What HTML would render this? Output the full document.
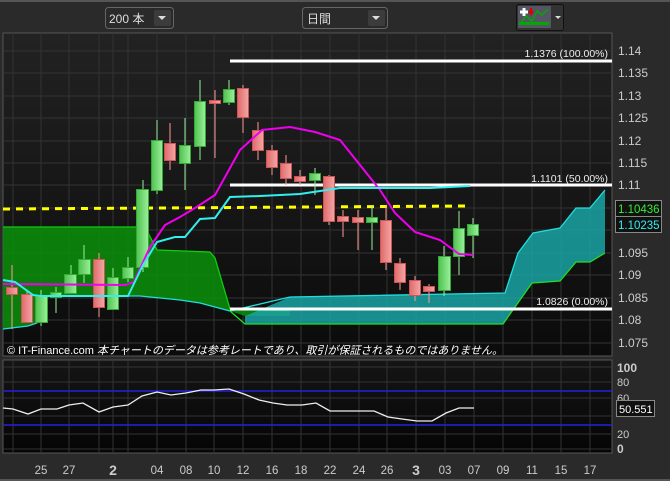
<!DOCTYPE html><html><head><meta charset="utf-8"><style>
body{margin:0;width:670px;height:481px;background:#2a2a2a;overflow:hidden;font-family:"Liberation Sans","Noto Sans CJK JP",sans-serif}
</style></head><body>
<svg width="670" height="481" xmlns="http://www.w3.org/2000/svg" style="position:absolute;left:0;top:0;font-family:'Liberation Sans','Noto Sans CJK JP',sans-serif">
<defs>
<linearGradient id="bg" x1="0" y1="0" x2="0" y2="1"><stop offset="0" stop-color="#222"/><stop offset="1" stop-color="#0b0b0b"/></linearGradient>
<linearGradient id="gc" x1="0" y1="0" x2="1" y2="0"><stop offset="0" stop-color="#4fc24f"/><stop offset="1" stop-color="#9af09a"/></linearGradient>
<linearGradient id="rc" x1="0" y1="0" x2="1" y2="0"><stop offset="0" stop-color="#e06a6a"/><stop offset="1" stop-color="#f4a6a6"/></linearGradient>
<linearGradient id="bg2" x1="0" y1="0" x2="0" y2="1"><stop offset="0" stop-color="#151515"/><stop offset="1" stop-color="#050505"/></linearGradient>
</defs>
<rect x="0" y="0" width="670" height="2" fill="#555"/>
<rect x="105.5" y="7.5" width="68" height="21" rx="3" fill="#2a2a2a" stroke="#666"/>
<text x="109" y="23" fill="#ddd" font-size="12">200 本</text>
<rect x="154" y="10" width="17" height="16" rx="2" fill="#3c3c3c"/><path d="M158 16h8l-4 4z" fill="#ddd"/>
<rect x="302.5" y="7.5" width="85" height="21" rx="3" fill="#2a2a2a" stroke="#666"/>
<text x="307" y="23" fill="#ddd" font-size="12">日間</text>
<rect x="368" y="10" width="17" height="16" rx="2" fill="#3c3c3c"/><path d="M372 16h8l-4 4z" fill="#ddd"/>
<rect x="516.5" y="4.5" width="47" height="26" rx="2" fill="#333" stroke="#111"/>
<rect x="518" y="6" width="33" height="22" fill="#556"/>
<path d="M520 12h8M524 8v8" stroke="#fff" stroke-width="3"/>
<path d="M520 24l6-8 6 5 5-10 5 4 6-6" stroke="#0a0" stroke-width="1.5" fill="none"/>
<path d="M531 8v5M529 11l2 3 2-3" stroke="#d00" stroke-width="2" fill="none"/>
<rect x="519" y="22" width="30" height="3" fill="#0a0"/>
<path d="M555 16h6l-3 3z" fill="#ddd"/>
<rect x="3" y="33" width="609" height="323" fill="url(#bg)" stroke="#555"/>
<g stroke="#333" stroke-width="1">
<path d="M13 33v323M41 33v323M69 33v323M99 33v323M113 33v323M128 33v323M157 33v323M186 33v323M214 33v323M243 33v323M272 33v323M301 33v323M330 33v323M359 33v323M387 33v323M416 33v323M445 33v323M474 33v323M503 33v323M532 33v323M561 33v323M590 33v323"/>
<path d="M3 51h609M3 73h609M3 96h609M3 118h609M3 141h609M3 163h609M3 185h609M3 208h609M3 230h609M3 253h609M3 275h609M3 298h609M3 320h609M3 343h609"/>
</g>
<polygon points="3,227 145,227 157,250 210,252 215,258 230,309 290,311 290,316 245,316 230,311 200,303 180,300 140,296 45,296 37,323 28,326 3,329" fill="#0a8a0a" opacity="0.9"/>
<polyline points="3,227 145,227 157,250 210,252 215,258 230,309 290,311" fill="none" stroke="#1c1" stroke-width="1.3"/>
<polygon points="245,316 290,297 505,293 518,253 533,233 560,228 576,208 590,208 605,190 605,253 590,262 576,262 560,281 532,283 503,324 245,324" fill="#1aa3a3" opacity="0.85"/>
<polyline points="230,311 290,297 505,293 518,253 533,233 560,228 576,208 590,208 605,190" fill="none" stroke="#2dd" stroke-width="1.3"/>
<polyline points="230,311 245,324 503,324 532,283 560,281 576,262 590,262 605,253" fill="none" stroke="#2d2" stroke-width="1.3"/>
<polyline points="3,329 28,326 37,323 45,296 140,296 180,300 200,303 230,311" fill="none" stroke="#2dd" stroke-width="1.3"/>
<path d="M230 61H612M230 185H612M230 309H612" stroke="#fff" stroke-width="3"/>
<text x="608" y="57" fill="#eee" font-size="10.5" text-anchor="end">1.1376 (100.00%)</text>
<text x="608" y="182" fill="#eee" font-size="10.5" text-anchor="end">1.1101 (50.00%)</text>
<text x="608" y="305" fill="#eee" font-size="10.5" text-anchor="end">1.0826 (0.00%)</text>
<path d="M3 209L465 206" stroke="#ff0" stroke-width="3" stroke-dasharray="7,6"/>
<g stroke-width="1">
<g stroke="#f99"><path d="M12 265v64M27 290v33M99 253v64M170 123v47M215 90v68M243 85v48M258 122v38M272 145v30M286 155v30M300 170v15M329 175v50M343 210v27M358 210v40M386 205v65M400 258v32M415 276v25M429 284v19"/></g>
<g stroke="#9e9"><path d="M41 290v36M56 287v26M71 265v28M84 245v38M113 268v40M128 257v25M143 180v92M157 120v74M185 118v72M200 80v80M229 80v25M315 168v27M372 205v45M444 246v50M459 211v64M473 218v40"/></g>
<g fill="url(#rc)" stroke="#c55"><rect x="6.5" y="287.5" width="11" height="7"/><rect x="21.5" y="294.5" width="11" height="28"/><rect x="93.5" y="259.5" width="11" height="48"/><rect x="164.5" y="143.5" width="11" height="17"/><rect x="209.5" y="100.5" width="11" height="3"/><rect x="237.5" y="88.5" width="11" height="29"/><rect x="252.5" y="130.5" width="11" height="20"/><rect x="266.5" y="150.5" width="11" height="17"/><rect x="280.5" y="163.5" width="11" height="15"/><rect x="294.5" y="176.5" width="11" height="5"/><rect x="323.5" y="176.5" width="11" height="45"/><rect x="337.5" y="216.5" width="11" height="5"/><rect x="352.5" y="217.5" width="11" height="5"/><rect x="380.5" y="220.5" width="11" height="42"/><rect x="394.5" y="263.5" width="11" height="19"/><rect x="409.5" y="280.5" width="11" height="15"/><rect x="423.5" y="286.5" width="11" height="5"/></g>
<g fill="url(#gc)" stroke="#3a3"><rect x="35.5" y="296.5" width="12" height="26"/><rect x="50.5" y="292.5" width="11" height="5"/><rect x="64.5" y="274.5" width="12" height="19"/><rect x="78.5" y="259.5" width="12" height="15"/><rect x="107.5" y="277.5" width="11" height="32"/><rect x="122.5" y="267.5" width="11" height="11"/><rect x="136.5" y="189.5" width="12" height="78"/><rect x="151.5" y="140.5" width="11" height="50"/><rect x="179.5" y="145.5" width="11" height="18"/><rect x="194.5" y="101.5" width="11" height="45"/><rect x="223.5" y="89.5" width="11" height="13"/><rect x="309.5" y="173.5" width="11" height="7"/><rect x="366.5" y="217.5" width="11" height="5"/><rect x="438.5" y="256.5" width="12" height="34"/><rect x="453.5" y="228.5" width="11" height="28"/><rect x="467.5" y="224.5" width="11" height="11"/></g>
</g>
<polyline points="3,284 125,285 134,282 150,247 165,225 180,217 195,208 215,195 240,150 262,130 290,127 315,132 340,140 360,165 380,190 395,213 415,232 440,240 459,254 473,255" fill="none" stroke="#e0e" stroke-width="2"/>
<polyline points="3,280 15,282 33,295 40,296 128,296 143,265 157,242 175,237 185,237 200,219 215,218 230,197 260,196 300,194 340,188 430,188 470,186" fill="none" stroke="#3ee" stroke-width="2"/>
<text x="7" y="354" fill="#fff" font-size="11">© IT-Finance.com <tspan font-style="italic">本チャートのデータは参考レートであり、取引が保証されるものではありません。</tspan></text>
<g fill="#ccc" font-size="12">
<text x="618" y="55">1.14</text><text x="618" y="77">1.135</text><text x="618" y="100">1.13</text><text x="618" y="122">1.125</text><text x="618" y="145">1.12</text><text x="618" y="167">1.115</text><text x="618" y="189">1.11</text><text x="618" y="257">1.095</text><text x="618" y="279">1.09</text><text x="618" y="302">1.085</text><text x="618" y="324">1.08</text><text x="618" y="347">1.075</text>
</g>
<rect x="615.5" y="200.5" width="46" height="16" fill="#111" stroke="#888"/><text x="618" y="213" fill="#3e3" font-size="11.5">1.10436</text>
<rect x="615.5" y="216.5" width="46" height="16" fill="#111" stroke="#888"/><text x="618" y="229" fill="#3ee" font-size="11.5">1.10235</text>
<rect x="3" y="360" width="609" height="93" fill="url(#bg2)" stroke="#555"/>
<g stroke="#333"><path d="M13 360v93M41 360v93M69 360v93M99 360v93M113 360v93M128 360v93M157 360v93M186 360v93M214 360v93M243 360v93M272 360v93M301 360v93M330 360v93M359 360v93M387 360v93M416 360v93M445 360v93M474 360v93M503 360v93M532 360v93M561 360v93M590 360v93M3 367h609M3 382h609M3 398h609M3 416h609M3 434h609M3 449h609"/></g>
<path d="M3 391H612M3 425H612" stroke="#22d" stroke-width="1.5"/>
<polyline points="3,408 13,409 28,414 41,409 57,409 69,405 83,403 99,412 113,407 128,405 142,396 157,392 171,395 186,393 201,390 214,390 229,389 244,394 259,400 273,403 287,405 302,405 316,403 330,411 374,411 388,417 402,419 417,421 432,421 446,413 459,408 474,408" fill="none" stroke="#eee" stroke-width="1.3"/>
<g fill="#ccc" font-size="11"><text x="617" y="372" font-weight="bold" font-size="12">100</text><text x="617" y="386">80</text><text x="617" y="402">60</text><text x="617" y="438">20</text><text x="617" y="453" font-weight="bold" font-size="12">0</text></g>
<rect x="616.5" y="400.5" width="38" height="16" fill="#111" stroke="#888"/><text x="619" y="413" fill="#fff" font-size="11">50.551</text>
<g fill="#ccc" font-size="11.5" text-anchor="middle">
<text x="41" y="474">25</text><text x="69" y="474">27</text><text x="113" y="475" font-weight="bold" font-size="14">2</text><text x="157" y="474">04</text><text x="186" y="474">08</text><text x="214" y="474">10</text><text x="243" y="474">12</text><text x="272" y="474">16</text><text x="301" y="474">18</text><text x="330" y="474">22</text><text x="359" y="474">24</text><text x="387" y="474">26</text><text x="416" y="475" font-weight="bold" font-size="14">3</text><text x="445" y="474">03</text><text x="474" y="474">07</text><text x="503" y="474">09</text><text x="532" y="474">11</text><text x="561" y="474">15</text><text x="590" y="474">17</text>
</g>
<rect x="0" y="479" width="670" height="2" fill="#555"/>
</svg>
</body></html>
